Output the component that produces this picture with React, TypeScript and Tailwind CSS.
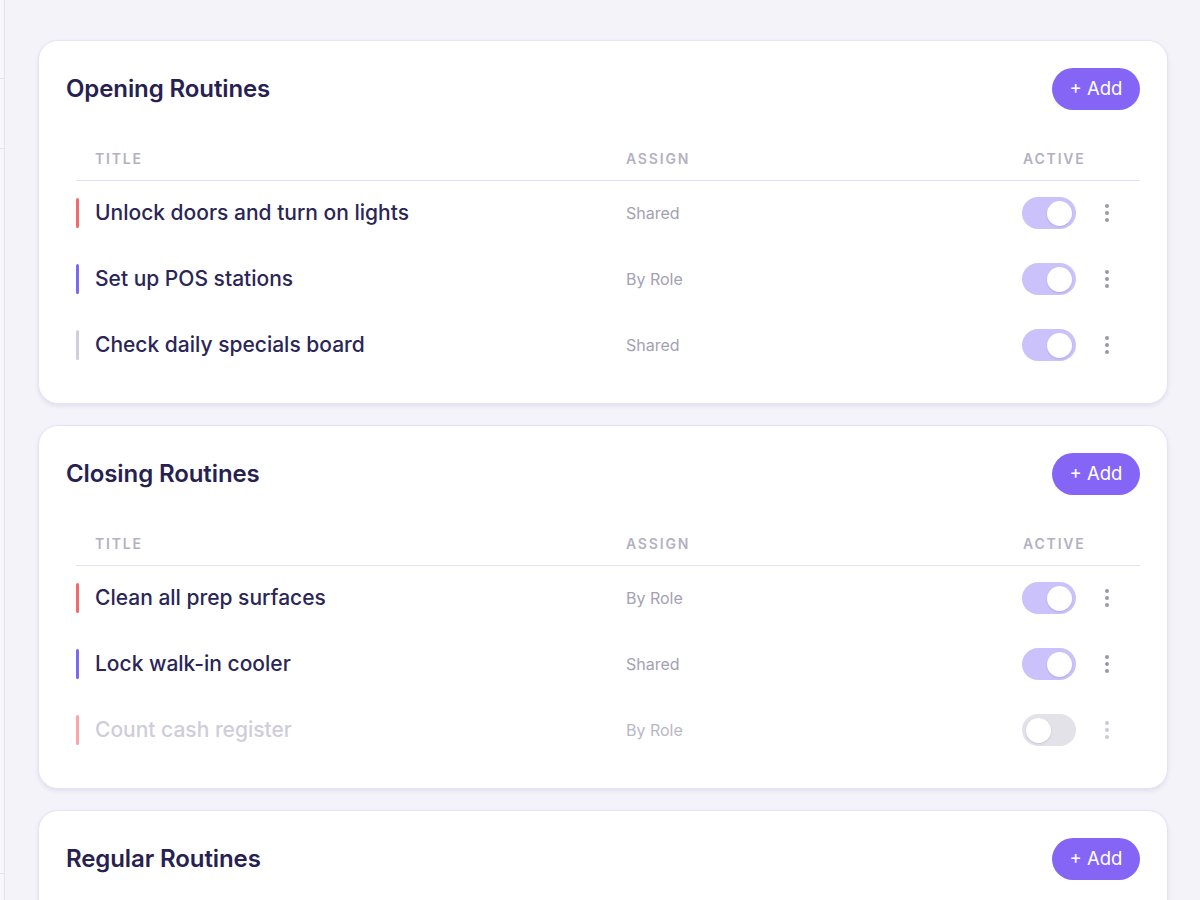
import { useState } from "react";

type Routine = {
  title: string;
  assign: string;
  color: string;
  active: boolean;
};

const sections: { name: string; items: Routine[] }[] = [
  {
    name: "Opening Routines",
    items: [
      { title: "Unlock doors and turn on lights", assign: "Shared", color: "bg-[#f46a6a]", active: true },
      { title: "Set up POS stations", assign: "By Role", color: "bg-[#7b68f4]", active: true },
      { title: "Check daily specials board", assign: "Shared", color: "bg-[#d0cfd9]", active: true },
    ],
  },
  {
    name: "Closing Routines",
    items: [
      { title: "Clean all prep surfaces", assign: "By Role", color: "bg-[#f46a6a]", active: true },
      { title: "Lock walk-in cooler", assign: "Shared", color: "bg-[#7b68f4]", active: true },
      { title: "Count cash register", assign: "By Role", color: "bg-[#f46a6a]", active: false },
    ],
  },
  {
    name: "Regular Routines",
    items: [
      { title: "Restock napkins and utensils", assign: "Shared", color: "bg-[#7b68f4]", active: true },
    ],
  },
];

function Toggle({ on }: { on: boolean }) {
  return (
    <div
      className={`flex h-[32px] w-[54px] items-center rounded-full px-[4px] ${
        on ? "justify-end bg-[#cbc2fb]" : "justify-start bg-[#e3e2e9]"
      }`}
    >
      <div className="h-[25px] w-[25px] rounded-full bg-white shadow-[0_1px_2px_rgba(40,30,90,0.15)]" />
    </div>
  );
}

function Dots({ faded }: { faded: boolean }) {
  return (
    <div className={`flex flex-col items-center gap-[3px] ${faded ? "opacity-50" : ""}`}>
      <span className="h-[4px] w-[4px] rounded-full bg-[#9a98aa]" />
      <span className="h-[4px] w-[4px] rounded-full bg-[#9a98aa]" />
      <span className="h-[4px] w-[4px] rounded-full bg-[#9a98aa]" />
    </div>
  );
}

function RoutineCard({ name, items }: { name: string; items: Routine[] }) {
  const [rows] = useState(items);
  return (
    <div className="shrink-0 rounded-[20px] border border-[#e6e3f8] bg-white px-[27px] pt-[27px] pb-[27px] shadow-[0_2px_4px_rgba(60,50,130,0.10)]">
      <div className="flex h-[42px] items-center justify-between">
        <h2 className="text-[24px] font-semibold tracking-[-0.1px] text-[#272152]">{name}</h2>
        <button className="h-[42px] w-[88px] rounded-full bg-[#8465f6] text-[18.5px] text-white">
          + Add
        </button>
      </div>

      <div className="ml-[10px] mt-[22px]">
        <div className="flex h-[49px] items-center border-b border-[#e3e0f8] pt-[4px] text-[14px] font-semibold tracking-[0.13em] text-[#b3b1c1]">
          <div className="w-[550px] pl-[19px]">TITLE</div>
          <div className="flex-1">ASSIGN</div>
          <div className="w-[117px]">ACTIVE</div>
        </div>
        <div className="flex flex-col gap-[4px] pt-[1px]">
          {rows.map((r) => (
            <div key={r.title} className="flex h-[62px] items-center">
              <div className="flex w-[550px] items-center">
                <span
                  className={`h-[30px] w-[3px] rounded-full ${r.color} ${r.active ? "" : "opacity-60"}`}
                />
                <span
                  className={`ml-[16px] text-[21px] font-medium ${
                    r.active ? "text-[#2a2656]" : "text-[#cfcdd9]"
                  }`}
                >
                  {r.title}
                </span>
              </div>
              <div className={`flex-1 text-[16px] ${r.active ? "text-[#a3a1b3]" : "text-[#b9b7c6]"}`}>
                {r.assign}
              </div>
              <div className="flex w-[117px] items-center">
                <div className="-ml-[1px]">
                  <Toggle on={r.active} />
                </div>
                <div className="ml-[29px]">
                  <Dots faded={!r.active} />
                </div>
              </div>
            </div>
          ))}
        </div>
      </div>
    </div>
  );
}

export default function App() {
  return (
    <div
      className="flex h-[900px] w-[1200px] overflow-hidden bg-[#f4f3f9]"
      style={{ fontFamily: "Inter, 'Noto Sans', sans-serif" }}
    >
      <aside className="flex h-full w-[5px] shrink-0 flex-col border-r border-[#e4e2f5] bg-[#f7f7fb]">
        <div className="h-[79px] border-b border-[#e4e2f5]" />
        <div className="h-[70px] border-b border-[#e4e2f5]" />
        <div className="h-[725px] border-b border-[#e4e2f5]" />
      </aside>
      <main className="flex flex-1 flex-col gap-[21px] overflow-hidden pl-[33px] pr-[32px] pt-[40px]">
        {sections.map((s) => (
          <RoutineCard key={s.name} name={s.name} items={s.items} />
        ))}
      </main>
    </div>
  );
}
